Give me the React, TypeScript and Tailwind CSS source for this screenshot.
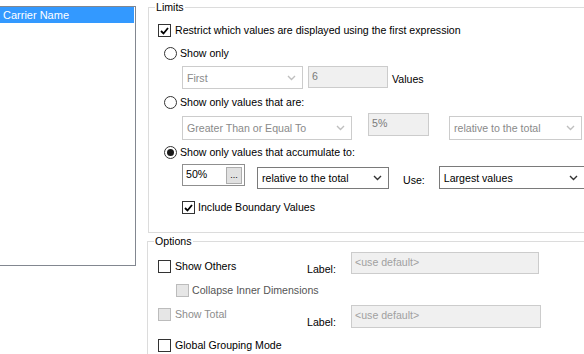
import React from 'react';

const FONT = { fontFamily: '"Liberation Sans", Arial, sans-serif' };

function CheckBox({ checked = false, disabled = false }: { checked?: boolean; disabled?: boolean }) {
  return (
    <span
      className={`flex h-[13px] w-[13px] shrink-0 items-center justify-center border ${
        disabled ? 'border-[#bcbcbc] bg-[#e6e6e6]' : 'border-[#333333] bg-white'
      }`}
    >
      {checked && (
        <svg width="9" height="8" viewBox="0 0 9 8">
          <polyline points="1,4 3.5,6.5 8,1" fill="none" stroke="#000" strokeWidth="1.8" />
        </svg>
      )}
    </span>
  );
}

function Radio({ checked = false }: { checked?: boolean }) {
  return (
    <span className="flex h-[13px] w-[13px] shrink-0 items-center justify-center rounded-full border border-[#333333] bg-white">
      {checked && <span className="h-[7px] w-[7px] rounded-full bg-[#1a1a1a]" />}
    </span>
  );
}

function Chevron({ disabled }: { disabled?: boolean }) {
  return (
    <svg width="9" height="6" viewBox="0 0 9 6" className="shrink-0">
      <polyline points="1,1 4.5,4.5 8,1" fill="none" stroke={disabled ? '#bfbfbf' : '#333'} strokeWidth="1.4" />
    </svg>
  );
}

function Select({
  value,
  className,
  disabled = false,
}: {
  value: string;
  className: string;
  disabled?: boolean;
}) {
  return (
    <div
      className={`flex shrink-0 items-center justify-between bg-white pl-[4px] pr-[6px] ${
        disabled ? 'border border-[#cccccc] text-[#8a8a8a]' : 'border border-[#7a7a7a] text-black'
      } ${className}`}
    >
      <span className="leading-[14px]">{value}</span>
      <Chevron disabled={disabled} />
    </div>
  );
}

function TextBox({ value, className }: { value: string; className: string }) {
  return (
    <div className={`shrink-0 border border-[#cccccc] bg-[#f0f0f0] px-[3px] pt-[2px] leading-[14px] text-[#7a7a7a] ${className}`}>
      {value}
    </div>
  );
}

export default function App() {
  return (
    <div className="flex h-[354px] w-[584px] overflow-hidden bg-white text-[10.6px] text-black" style={FONT}>
      {/* Field list */}
      <div className="mt-[6px] h-[260px] w-[136px] shrink-0 border-t border-r border-b border-[#828790] bg-white">
        <div className="flex h-[16px] w-[134px] items-center bg-[#3399ff] pl-[3px] text-[11px] leading-[14px] text-white">
          Carrier Name
        </div>
      </div>

      <div className="ml-[12px] flex w-[440px] shrink-0 flex-col">
        {/* Limits */}
        <fieldset className="border border-[#dcdcdc] pb-[18px]">
          <legend className="ml-[6px] px-[1px] leading-[14px]">Limits</legend>

          <div className="ml-[9px] mt-[10px] flex h-[13px] items-center gap-[4px]">
            <CheckBox checked />
            <span className="leading-[13px]">Restrict which values are displayed using the first expression</span>
          </div>

          <div className="ml-[15px] mt-[10px] flex h-[13px] items-center gap-[3px]">
            <Radio />
            <span className="leading-[13px]">Show only</span>
          </div>

          <div className="ml-[33px] mt-[6px] flex items-start">
            <Select value="First" disabled className="h-[23px] w-[121px]" />
            <TextBox value="6" className="ml-[5px] h-[22px] w-[80px]" />
            <span className="ml-[4px] mt-[6px] leading-[14px]">Values</span>
          </div>

          <div className="ml-[15px] mt-[7px] flex h-[13px] items-center gap-[3px]">
            <Radio />
            <span className="leading-[13px]">Show only values that are:</span>
          </div>

          <div className="ml-[33px] mt-[4px] flex items-start">
            <Select value="Greater Than or Equal To" disabled className="mt-[3px] h-[24px] w-[170px]" />
            <TextBox value="5%" className="ml-[16px] h-[23px] w-[61px]" />
            <Select value="relative to the total" disabled className="ml-[20px] mt-[3px] h-[24px] w-[133px]" />
          </div>

          <div className="ml-[15px] mt-[6px] flex h-[13px] items-center gap-[3px]">
            <Radio checked />
            <span className="leading-[13px]">Show only values that accumulate to:</span>
          </div>

          <div className="ml-[33px] mt-[4px] flex items-start">
            <div className="mt-[1px] flex h-[22px] w-[63px] shrink-0 items-start justify-between border border-[#8f8f8f] bg-white pl-[3px] pr-[2px]">
              <span className="pt-[2px] leading-[14px]">50%</span>
              <span className="mt-[2px] flex h-[17px] w-[16px] items-end justify-center border border-[#adadad] bg-[#e1e1e1] pb-[3px] text-[9px] leading-[9px]">
                ...
              </span>
            </div>
            <Select value="relative to the total" className="ml-[12px] mt-[4px] h-[22px] w-[132px]" />
            <span className="ml-[14px] mt-[10px] leading-[14px]">Use:</span>
            <Select value="Largest values" className="ml-[14px] mt-[3px] h-[23px] w-[146px]" />
          </div>

          <div className="ml-[33px] mt-[12px] flex h-[13px] items-center gap-[3px]">
            <CheckBox checked />
            <span className="leading-[13px]">Include Boundary Values</span>
          </div>
        </fieldset>

        {/* Options */}
        <fieldset className="ml-[-1px] mt-[1px] border border-[#dcdcdc] pb-[20px]">
          <legend className="ml-[6px] px-[1px] leading-[14px]">Options</legend>

          <div className="mt-[4px] flex items-start">
            <div className="ml-[10px] mt-[8px] flex h-[13px] w-[149px] items-center gap-[4px]">
              <CheckBox />
              <span className="leading-[13px]">Show Others</span>
            </div>
            <span className="mt-[10px] w-[44px] leading-[14px]">Label:</span>
            <TextBox value="<use default>" className="h-[22px] w-[188px] text-[#a0a0a0]" />
          </div>

          <div className="ml-[28px] mt-[8px] flex h-[13px] items-center gap-[3px] text-[#555555]">
            <CheckBox disabled />
            <span className="leading-[13px]">Collapse Inner Dimensions</span>
          </div>

          <div className="mt-[8px] flex items-start">
            <div className="ml-[10px] mt-[3px] flex h-[13px] w-[149px] items-center gap-[4px] text-[#8d8d8d]">
              <CheckBox disabled />
              <span className="leading-[13px]">Show Total</span>
            </div>
            <span className="mt-[10px] w-[44px] leading-[14px]">Label:</span>
            <TextBox value="<use default>" className="h-[23px] w-[190px] text-[#a0a0a0]" />
          </div>

          <div className="ml-[10px] mt-[10px] flex h-[13px] items-center gap-[4px]">
            <CheckBox />
            <span className="leading-[13px]">Global Grouping Mode</span>
          </div>
        </fieldset>
      </div>
    </div>
  );
}
